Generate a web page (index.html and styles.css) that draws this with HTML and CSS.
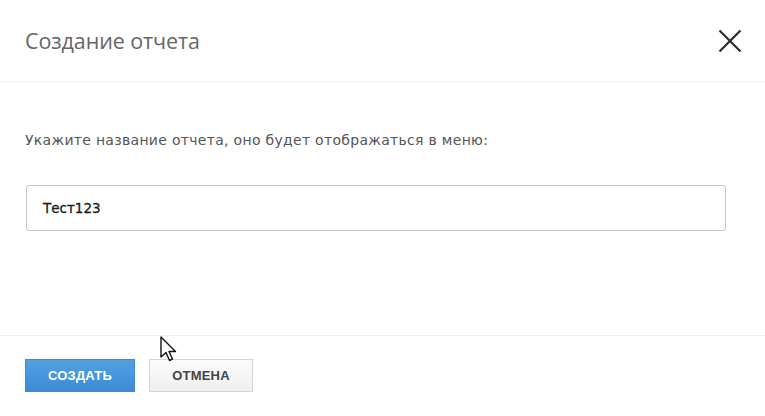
FILE: index.html
```html
<!DOCTYPE html>
<html lang="ru">
<head>
<meta charset="utf-8">
<title>Создание отчета</title>
<link rel="stylesheet" href="styles.css">
</head>
<body>
<div class="modal">
  <div class="modal-header">
    <h1 class="modal-title">Создание отчета</h1>
    <button class="close-btn" aria-label="Закрыть">
      <svg width="24" height="24" viewBox="0 0 24 24"><path d="M1.5 1.5 L22.5 22.5 M22.5 1.5 L1.5 22.5" stroke="#2b2b2b" stroke-width="2.2" fill="none"/></svg>
    </button>
  </div>
  <div class="modal-body">
    <p class="field-label">Укажите название отчета, оно будет отображаться в меню:</p>
    <div class="text-input">Тест123</div>
  </div>
  <div class="modal-footer">
    <button class="btn btn-primary">СОЗДАТЬ</button>
    <button class="btn btn-default">ОТМЕНА</button>
    <svg class="cursor" width="20" height="28" viewBox="0 0 20 28"><path d="M1 1 L1 21 L6 16.5 L9.5 24.5 L12.5 23 L9 15.5 L15.5 15.5 Z" fill="#fff" stroke="#111" stroke-width="1.4" stroke-linejoin="round"/></svg>
  </div>
</div>
</body>
</html>
```
FILE: styles.css
```css
* { box-sizing: border-box; }
html, body { margin: 0; padding: 0; background: #fff; }
body { font-family: "Open Sans", "Liberation Sans", sans-serif; width: 765px; height: 416px; overflow: hidden; }

.modal { display: flex; flex-direction: column; height: 416px; }

.modal-header {
  height: 82px;
  display: flex;
  align-items: center;
  justify-content: space-between;
  padding: 0 23px 0 25px;
  border-bottom: 1px solid #f0f0f0;
}
.modal-title {
  margin: 0;
  font-weight: 400;
  font-size: 21.5px;
  color: #666;
  letter-spacing: -0.1px;
}
.close-btn {
  border: 0;
  background: none;
  padding: 0;
  width: 24px;
  height: 24px;
  display: flex;
  margin-top: 1px;
}

.modal-body {
  height: 253px;
  padding: 48px 39px 0 26px;
}
.field-label {
  margin: 0 0 35px -1px;
  font-family: "DejaVu Sans", sans-serif;
  font-size: 14px;
  letter-spacing: 0.3px;
  line-height: 20px;
  color: #555;
}
.text-input {
  height: 46px;
  border: 1px solid #c8c8c8;
  border-radius: 3px;
  padding: 0 16px;
  display: flex;
  align-items: center;
  font-family: "DejaVu Sans", sans-serif;
  font-size: 13.5px;
  color: #1a1a1a;
  font-weight: 400;
  -webkit-text-stroke: 0.3px #1a1a1a;
}

.modal-footer {
  position: relative;
  flex: 1;
  border-top: 1px solid #f0f0f0;
  padding: 23px 25px 0;
  display: flex;
  align-items: flex-start;
  gap: 14px;
}
.btn {
  height: 33px;
  font-family: "Liberation Sans", sans-serif;
  font-weight: 700;
  font-size: 13px;
  letter-spacing: 0.2px;
  cursor: pointer;
}
.btn-primary {
  width: 110px;
  color: #fff;
  border: 1px solid #3f8ad0;
  background: linear-gradient(#52a0e2, #3d8bd4);
}
.btn-default {
  width: 104px;
  color: #444;
  border: 1px solid #d6d6d6;
  background: linear-gradient(#fbfbfb, #efefef);
}
.cursor {
  position: absolute;
  left: 160px;
  top: 0;
}
```
